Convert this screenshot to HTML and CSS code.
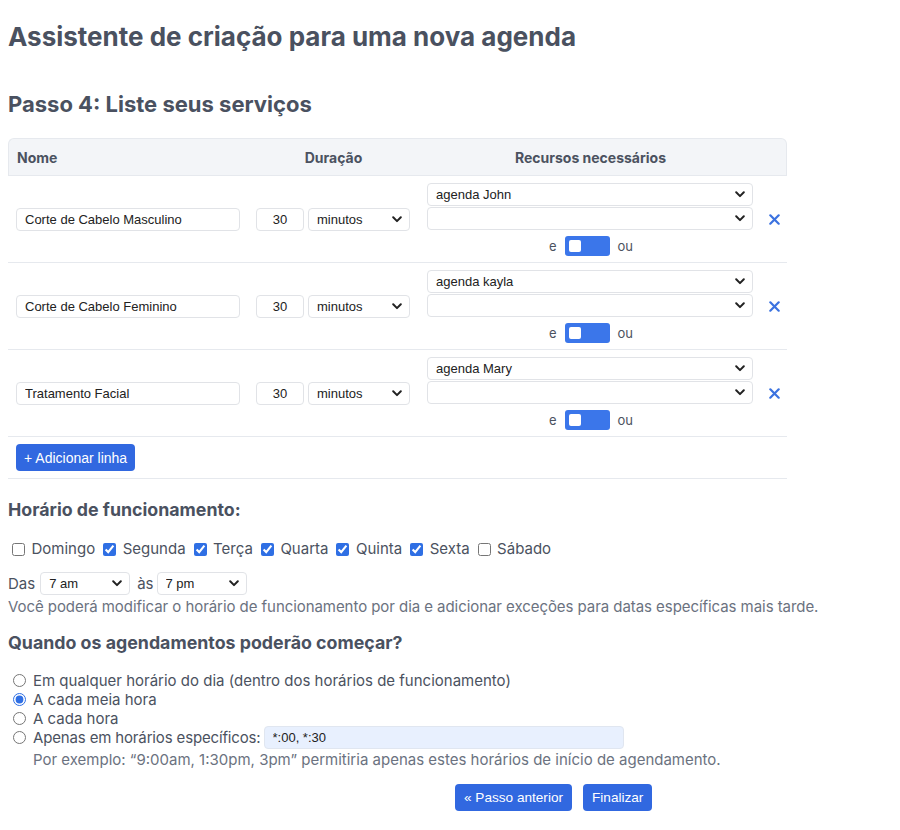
FILE: index.html
```html
<!DOCTYPE html>
<html lang="pt">
<head>
<meta charset="utf-8">
<title>Assistente de criação</title>
<link rel="stylesheet" href="styles.css">
</head>
<body>
<div class="page">
  <h1 class="title">Assistente de criação para uma nova agenda</h1>
  <h2 class="step">Passo 4: Liste seus serviços</h2>

  <table class="services">
    <thead>
      <tr>
        <th class="col-name">Nome</th>
        <th class="col-dur">Duração</th>
        <th class="col-res">Recursos necessários</th>
        <th class="col-del"></th>
      </tr>
    </thead>
    <tbody>
      <tr>
        <td class="col-name"><input class="txt name" type="text" value="Corte de Cabelo Masculino"></td>
        <td class="col-dur"><div class="dur"><input class="txt num" type="text" value="30"><select class="sel unit"><option>minutos</option></select></div></td>
        <td class="col-res">
          <div class="res">
            <select class="sel resource"><option>agenda John</option></select>
            <select class="sel resource"><option></option></select>
            <div class="andor"><span>e</span><span class="toggle"><span class="knob"></span></span><span>ou</span></div>
          </div>
        </td>
        <td class="col-del"><svg class="del" width="11" height="11" viewBox="0 0 11 11"><path d="M1.3 1.3 L9.7 9.7 M9.7 1.3 L1.3 9.7" stroke="#3b72e0" stroke-width="2.2" stroke-linecap="round"/></svg></td>
      </tr>
      <tr>
        <td class="col-name"><input class="txt name" type="text" value="Corte de Cabelo Feminino"></td>
        <td class="col-dur"><div class="dur"><input class="txt num" type="text" value="30"><select class="sel unit"><option>minutos</option></select></div></td>
        <td class="col-res">
          <div class="res">
            <select class="sel resource"><option>agenda kayla</option></select>
            <select class="sel resource"><option></option></select>
            <div class="andor"><span>e</span><span class="toggle"><span class="knob"></span></span><span>ou</span></div>
          </div>
        </td>
        <td class="col-del"><svg class="del" width="11" height="11" viewBox="0 0 11 11"><path d="M1.3 1.3 L9.7 9.7 M9.7 1.3 L1.3 9.7" stroke="#3b72e0" stroke-width="2.2" stroke-linecap="round"/></svg></td>
      </tr>
      <tr>
        <td class="col-name"><input class="txt name" type="text" value="Tratamento Facial"></td>
        <td class="col-dur"><div class="dur"><input class="txt num" type="text" value="30"><select class="sel unit"><option>minutos</option></select></div></td>
        <td class="col-res">
          <div class="res">
            <select class="sel resource"><option>agenda Mary</option></select>
            <select class="sel resource"><option></option></select>
            <div class="andor"><span>e</span><span class="toggle"><span class="knob"></span></span><span>ou</span></div>
          </div>
        </td>
        <td class="col-del"><svg class="del" width="11" height="11" viewBox="0 0 11 11"><path d="M1.3 1.3 L9.7 9.7 M9.7 1.3 L1.3 9.7" stroke="#3b72e0" stroke-width="2.2" stroke-linecap="round"/></svg></td>
      </tr>
      <tr class="add-row">
        <td colspan="4"><button class="btn" type="button">+ Adicionar linha</button></td>
      </tr>
    </tbody>
  </table>

  <h3 class="section">Horário de funcionamento:</h3>
  <div class="days">
    <label><input type="checkbox"> Domingo</label>
    <label><input type="checkbox" checked> Segunda</label>
    <label><input type="checkbox" checked> Terça</label>
    <label><input type="checkbox" checked> Quarta</label>
    <label><input type="checkbox" checked> Quinta</label>
    <label><input type="checkbox" checked> Sexta</label>
    <label><input type="checkbox"> Sábado</label>
  </div>
  <div class="hours">
    <span>Das</span>
    <select class="sel hour"><option>7 am</option></select>
    <span class="as">às</span>
    <select class="sel hour"><option>7 pm</option></select>
  </div>
  <p class="help">Você poderá modificar o horário de funcionamento por dia e adicionar exceções para datas específicas mais tarde.</p>

  <h3 class="section q">Quando os agendamentos poderão começar?</h3>
  <div class="radios">
    <label><input type="radio" name="start"> Em qualquer horário do dia (dentro dos horários de funcionamento)</label>
    <label><input type="radio" name="start" checked> A cada meia hora</label>
    <label><input type="radio" name="start"> A cada hora</label>
    <label class="specific"><input type="radio" name="start"> <span>Apenas em horários específicos:</span> <input class="txt times" type="text" value="*:00, *:30"></label>
    <p class="example">Por exemplo: “9:00am, 1:30pm, 3pm” permitiria apenas estes horários de início de agendamento.</p>
  </div>

  <div class="actions">
    <button class="btn" type="button">« Passo anterior</button>
    <button class="btn" type="button">Finalizar</button>
  </div>
</div>
</body>
</html>
```

FILE: styles.css
```css
* { box-sizing: border-box; }

body {
  margin: 0;
  background: #ffffff;
  color: #4b5260;
  font-family: Inter, "Noto Sans", sans-serif;
}

.page {
  padding: 0 8px;
}

.title {
  margin: 0;
  padding-top: 21px;
  font-size: 26px;
  line-height: 32px;
  font-weight: 700;
  color: #4a5160;
}

.step {
  margin: 0;
  padding-top: 38px;
  font-size: 22px;
  line-height: 26px;
  font-weight: 700;
  color: #4a5160;
}

.services {
  margin-top: 21px;
  width: 779px;
  border-collapse: separate;
  border-spacing: 0;
  font-family: "Liberation Sans", Arial, sans-serif;
  font-size: 13px;
}

.services thead th {
  background: #f3f5f8;
  height: 38px;
  padding: 0;
  font-family: Inter, "Noto Sans", sans-serif;
  font-size: 14px;
  font-weight: 700;
  color: #4b5260;
  border-top: 1px solid #e6e9ee;
  border-bottom: 1px solid #e6e9ee;
}
.services thead th:first-child {
  border-left: 1px solid #e6e9ee;
  border-top-left-radius: 6px;
  text-align: left;
  padding-left: 8px;
}
.services thead th:last-child {
  border-right: 1px solid #e6e9ee;
  border-top-right-radius: 6px;
}

.col-name { width: 240px; }
.col-dur { width: 171px; }
.col-res { width: 343px; }
.col-del { width: 25px; }

.services tbody td {
  padding: 0;
  border-bottom: 1px solid #e6e9ee;
  vertical-align: middle;
}
.services tbody td.col-name { padding-left: 8px; }
.services tbody td.col-res { padding: 7px 0 6px 8px; }
.services tbody td.col-del { padding-left: 7px; }

.txt {
  font-family: "Liberation Sans", Arial, sans-serif;
  font-size: 13px;
  color: #222;
  height: 23px;
  border: 1px solid #e1e3e7;
  border-radius: 4px;
  background: #fff;
  padding: 0 8px;
  outline: none;
}
.name { width: 224px; }

.dur {
  display: flex;
  gap: 4px;
  padding-left: 8px;
}
.num { width: 48px; text-align: center; padding: 0 4px; }

.sel {
  appearance: none;
  -webkit-appearance: none;
  font-family: "Liberation Sans", Arial, sans-serif;
  font-size: 13px;
  color: #222;
  height: 23px;
  border: 1px solid #e1e3e7;
  border-radius: 4px;
  background-color: #fff;
  background-image: url("data:image/svg+xml;utf8,<svg xmlns='http://www.w3.org/2000/svg' width='10' height='7' viewBox='0 0 10 7'><path d='M1.2 1.3 L5 5.1 L8.8 1.3' fill='none' stroke='%23222' stroke-width='2' stroke-linecap='round' stroke-linejoin='round'/></svg>");
  background-repeat: no-repeat;
  background-position: right 7px center;
  padding: 0 22px 0 8px;
  outline: none;
}
.unit { width: 102px; }

.res {
  display: flex;
  flex-direction: column;
  width: 326px;
}
.resource { width: 326px; }
.resource + .resource { margin-top: 1px; }

.andor {
  display: flex;
  justify-content: center;
  align-items: center;
  gap: 8px;
  height: 20px;
  margin-top: 6px;
  padding-left: 2px;
  color: #4b5260;
  font-family: Inter, "Noto Sans", sans-serif;
  font-size: 13px;
}
.toggle {
  display: inline-flex;
  align-items: center;
  width: 45px;
  height: 20px;
  background: #3b76ea;
  border-radius: 3px;
  padding-left: 4px;
}
.knob {
  width: 12px;
  height: 12px;
  background: #fff;
  border-radius: 2px;
}

.del {
  display: block;
}

.add-row td {
  height: 42px;
  padding-left: 8px !important;
}

.btn {
  font-family: "Liberation Sans", Arial, sans-serif;
  font-size: 14px;
  color: #fff;
  background: #3168e0;
  border: none;
  border-radius: 4px;
  height: 27px;
  padding: 0 8px;
  cursor: pointer;
}

.section {
  margin: 0;
  padding-top: 20px;
  font-size: 17.8px;
  line-height: 22px;
  font-weight: 700;
  color: #4a5160;
}

.days {
  display: flex;
  gap: 8px;
  margin-top: 18px;
  padding-left: 4px;
  font-size: 15px;
  line-height: 20px;
}
.days label {
  display: flex;
  align-items: center;
  gap: 6.5px;
}

input[type="checkbox"], input[type="radio"] {
  margin: 0;
  width: 13px;
  height: 13px;
  accent-color: #2f6fe4;
}

.hours {
  display: flex;
  align-items: center;
  gap: 5px;
  margin-top: 13px;
  font-size: 15px;
}
.hour { width: 90px; }
.hours .as { margin: 0 -2px 0 2px; }

.help {
  margin: 2px 0 0;
  font-size: 15px;
  line-height: 20px;
  letter-spacing: -0.06px;
  color: #6b7280;
}

.q { padding-top: 15px; }

.radios {
  margin-top: 17px;
  padding-left: 5px;
  font-size: 15px;
  line-height: 19px;
}
.radios label {
  display: flex;
  align-items: center;
  gap: 7px;
  height: 19px;
}
.specific span { letter-spacing: -0.15px; }
.times {
  width: 360px;
  background: #e8f0fe;
  border-color: #e0e6f0;
  margin-left: -4px;
}
.example {
  margin: 3px 0 0;
  padding-left: 20px;
  color: #6b7280;
}

.actions {
  display: flex;
  gap: 11px;
  margin-top: 15px;
  padding-left: 447px;
}
.actions .btn { font-size: 13.6px; padding: 0 9px; }
```
